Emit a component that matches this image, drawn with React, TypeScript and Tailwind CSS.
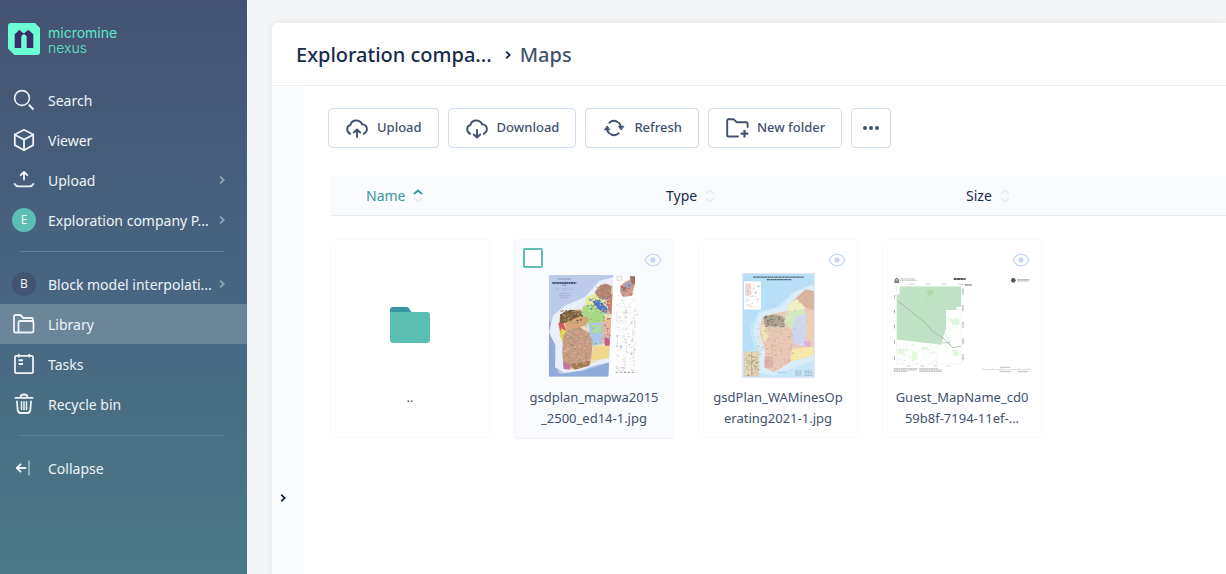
import React from 'react';
import clsx from 'clsx';

type IconProps = { className?: string };

const Stroke: React.FC<IconProps & { children: React.ReactNode; width?: number }> = ({
  className = 'w-6 h-6',
  children,
  width = 1.6,
}) => (
  <svg
    viewBox="0 0 24 24"
    className={className}
    fill="none"
    stroke="currentColor"
    strokeWidth={width}
    strokeLinecap="round"
    strokeLinejoin="round"
    aria-hidden="true"
  >
    {children}
  </svg>
);

const SearchIcon = () => (
  <Stroke>
    <circle cx="10" cy="10" r="7.4" />
    <path d="M16.8 16.8 21.5 21.5" strokeWidth="2" strokeLinecap="butt" />
  </Stroke>
);

const CubeIcon = () => (
  <Stroke width={1.8}>
    <path d="M12 1.8 21.2 6.5v10.6L12 22.2 2.8 17.1V6.5z" />
    <path d="M2.8 6.8 12 11.6l9.2-4.8M12 11.6v10.4" />
  </Stroke>
);

const UploadTrayIcon = () => (
  <Stroke width={1.8}>
    <path d="M12 11.5V4.2M8.7 7.2 12 4l3.3 3.2" />
    <path d="M2.6 16c1 1.7 2.3 2.4 4.2 2.4h10.4c1.9 0 3.2-.7 4.2-2.4" />
  </Stroke>
);

const LibraryIcon = () => (
  <Stroke width={1.8}>
    <path d="M5.5 20.5H3.5A1.5 1.5 0 0 1 2 19V4.5A1.5 1.5 0 0 1 3.5 3h4.8l3 3h8.2A1.5 1.5 0 0 1 21 7.5V9" />
    <path d="M6.5 20.5v-10A1.5 1.5 0 0 1 8 9h12a1.5 1.5 0 0 1 1.5 1.5V19a1.5 1.5 0 0 1-1.5 1.5z" />
  </Stroke>
);

const TasksIcon = () => (
  <Stroke width={1.8}>
    <rect x="3" y="3.8" width="18" height="17.4" rx="1.5" />
    <path d="M6.8 2.6v2M17.2 2.6v2" />
    <path d="M6.5 8.2H11M6.5 12H11" strokeLinecap="butt" strokeWidth="2" />
  </Stroke>
);

const BinIcon = () => (
  <Stroke width={1.8}>
    <path d="M3.5 5.8h17M8.5 5.5c0-2 1-3 3.500-3s3.500 1 3.500 3" />
    <path d="M5 9.5l.7 8.7c.2 1.900 1.300 2.800 3 2.800h6.600c1.700 0 2.800-.9 3-2.800L19 9.500" />
    <path d="M9.5 9.8v7.700M12 9.800v7.700M14.500 9.800v7.700" strokeWidth="1.5" />
  </Stroke>
);

const CollapseIcon = () => (
  <Stroke width={1.9}>
    <path d="M13.5 12H5M8.500 8.300 4.800 12l3.700 3.700" />
    <path d="M17 4.5v15" strokeWidth="1.8" opacity="0.5" strokeLinecap="butt" />
  </Stroke>
);

const CLOUD =
  'M5.2 17.800C3.200 16.800 2.200 15.300 2.200 13.200c0-2.100 1.300-3.800 3.200-4.300C6.200 6 8.600 4.500 11.300 4.500c2.600 0 4.800 1.500 5.700 3.900 2.900.1 4.900 2 4.900 4.700 0 2.200-1.100 3.800-3.100 4.700';

const CloudUpIcon = () => (
  <Stroke width={1.9}>
    <path d={CLOUD} />
    <path d="M12 21v-7M8.800 16.500 12 13.500l3.200 3" />
  </Stroke>
);

const CloudDownIcon = () => (
  <Stroke width={1.9}>
    <path d={CLOUD} />
    <path d="M12 14v7.500M8.800 18.500 12 21.500l3.200-3" />
  </Stroke>
);

const RefreshIcon = () => (
  <Stroke width={2}>
    <path d="M7.300 6.700A7 7 0 0 1 15.400 5.900M16.700 17.300a7 7 0 0 1-8.100.8" />
    <path d="M5 13a7 7 0 0 0 2 4M19 11a7 7 0 0 0-2-4" />
    <path d="M5 10.300 2.500 13.700h5zM19 13.700l-2.500-3.400h5z" fill="currentColor" strokeWidth="1" />
  </Stroke>
);

const NewFolderIcon = () => (
  <Stroke width={1.9}>
    <path d="M13 20.500H3.200a1 1 0 0 1-1-1V4.300a1 1 0 0 1 1-1h5.600l2.800 2.900h10a1 1 0 0 1 1 1V11" />
    <path d="M19.500 14v7.500M15.700 17.700h7.500" strokeLinecap="butt" strokeWidth="2.2" />
  </Stroke>
);

const ChevronRight: React.FC<IconProps> = ({ className }) => (
  <svg viewBox="0 0 8 8" className={className} fill="none" stroke="currentColor" strokeWidth="1.8" aria-hidden="true">
    <path d="M2.2 0.6 5.7 4 2.2 7.4" />
  </svg>
);

const EyeIcon = () => (
  <svg viewBox="0 0 18 14" className="w-[18px] h-[14px]" fill="none" stroke="#cddbef" strokeWidth="1.6" aria-hidden="true">
    <path d="M1 7C3 3 5.700 1.200 9 1.200S15 3 17 7c-2 4-4.700 5.800-8 5.800S3 11 1 7z" />
    <circle cx="9" cy="7" r="2.6" fill="#c4d4ec" stroke="none" />
  </svg>
);

const Logo = () => (
  <a href="#home" aria-label="micromine nexus" className="flex gap-2 px-2 pt-[23px] h-20">
    <svg viewBox="0 0 32 32" className="w-8 h-8 shrink-0" aria-hidden="true">
      <path d="M3 0h24l5 5v24a3 3 0 0 1-3 3H6.500L0 25.500V3a3 3 0 0 1 3-3z" fill="#6dfdd2" />
      <path
        d="M6.700 25V11.300L11.500 6.800 15 10h1.500L20.300 6.800l5 4.500V25h-6.600V13.500l-2-2.200h-1.600l-1.900 2.200V25z"
        fill="#3b2c6b"
      />
    </svg>
    <span className="font-['Inter','Liberation_Sans',sans-serif] text-[14px] leading-[15px] text-[#5fe8c4] pt-0.5">
      <span className="block">micromine</span>
      <span className="block font-light">nexus</span>
    </span>
  </a>
);

interface NavItem {
  label: string;
  icon?: React.ReactNode;
  badge?: { letter: string; color: string };
  more?: boolean;
  active?: boolean;
}

const NAV_GROUPS: NavItem[][] = [
  [
    { label: 'Search', icon: <SearchIcon /> },
    { label: 'Viewer', icon: <CubeIcon /> },
    { label: 'Upload', icon: <UploadTrayIcon />, more: true },
    { label: 'Exploration company P...', badge: { letter: 'E', color: 'bg-[#5bc0b2]' }, more: true },
  ],
  [
    { label: 'Block model interpolati...', badge: { letter: 'B', color: 'bg-[#455373]' }, more: true },
    { label: 'Library', icon: <LibraryIcon />, active: true },
    { label: 'Tasks', icon: <TasksIcon /> },
    { label: 'Recycle bin', icon: <BinIcon /> },
  ],
  [{ label: 'Collapse', icon: <CollapseIcon /> }],
];

const Sidebar = () => (
  <nav className="w-[247px] shrink-0 bg-linear-to-b from-[#445372] via-[#476581] to-[#4a7986] text-[#eef3f7]">
    <Logo />
    {NAV_GROUPS.map((group, i) => (
      <React.Fragment key={i}>
        {i > 0 && <hr className="ml-5 mr-[23px] mt-[11px] mb-3 border-[#63809a]" />}
        <ul>
          {group.map((item) => (
            <li key={item.label}>
              <a
                href="#nav"
                className={clsx(
                  'flex items-center h-10 pl-3 pr-[21px] text-[14px]',
                  item.active && 'bg-[#6b8699]'
                )}
              >
                {item.badge ? (
                  <span
                    className={clsx(
                      'flex items-center justify-center w-6 h-6 rounded-full text-[12px]',
                      item.badge.color
                    )}
                  >
                    {item.badge.letter}
                  </span>
                ) : (
                  item.icon
                )}
                <span className="flex-1 pl-3 whitespace-nowrap">{item.label}</span>
                {item.more && <ChevronRight className="w-2 h-2 text-[#8ea3b5]" />}
              </a>
            </li>
          ))}
        </ul>
      </React.Fragment>
    ))}
  </nav>
);

const SortIcon: React.FC<{ up?: boolean }> = ({ up }) => (
  <svg viewBox="0 0 10 14" className="w-[10px] h-[14px]" fill="none" strokeWidth="2" aria-hidden="true">
    <path d="M1 5 5 1.5 9 5" stroke={up ? '#349aa0' : '#e9eef3'} />
    <path d="M1 9 5 12.5 9 9" stroke="#e9eef3" />
  </svg>
);

// small deterministic generator so the map textures are stable between renders
const scatter = (seed: number, count: number, x: number, y: number, w: number, h: number) => {
  let s = seed;
  const next = () => {
    s = (s * 16807) % 2147483647;
    return s / 2147483647;
  };
  next();
  return Array.from({ length: count }, () => ({
    x: x + next() * w,
    y: y + next() * h,
    size: 2 + next() * 4,
    pick: next(),
  }));
};

interface SpecksProps {
  seed: number;
  count: number;
  area: [number, number, number, number];
  colors: string[];
  clip?: string;
  opacity?: number;
}

const Specks: React.FC<SpecksProps> = ({ seed, count, area, colors, clip, opacity = 1 }) => (
  <g clipPath={clip} opacity={opacity}>
    {scatter(seed, count, ...area).map((p, i) => (
      <rect
        key={i}
        x={p.x}
        y={p.y}
        width={p.size}
        height={p.size * 0.7}
        fill={colors[Math.floor(p.pick * colors.length)]}
      />
    ))}
  </g>
);

const GeologyMap = () => (
  <svg viewBox="115 115 276 309" className="w-[92px] h-[103px]" aria-hidden="true">
    <defs>
      <clipPath id="geo-sheet"><path d="M117 118H311L296 423H117z" /></clipPath>
      <clipPath id="geo-south">
        <path d="M165 285 205 275 240 290 252 325 246 365 240 388 195 400 162 392 158 350z" />
      </clipPath>
    </defs>
    <path d="M115 116H390V424H115z" fill="#fdfdfe" />
    <g clipPath="url(#geo-sheet)">
      <path d="M115 115H315V425H115z" fill="#bccbe9" />
      <path d="M117 250 140 290 135 350 150 400 117 423z" fill="#92abd8" />
      <path d="M117 370 150 415 220 405 300 380V423H117z" fill="#8fabd9" />
      <path d="M311 125 270 135 225 185 165 210 130 240 118 290 138 330 136 395 165 412 215 404 250 390 300 380z" fill="#e9eff9" />
      <path d="M311 150 285 142 262 160 254 180 228 198 215 218 180 222 152 238 146 270 152 300 160 330 156 360 166 396 190 402 240 388 262 375 298 368z" fill="#e9dfc0" />
      <path d="M255 170 272 148 290 144 306 152 304 180 290 192 270 190z" fill="#ad8570" />
      <path d="M290 190 311 170V240L298 232z" fill="#d07a74" />
      <path d="M230 185 256 174 275 196 300 232 285 238 252 215 228 205z" fill="#e5e997" />
      <path d="M248 196 270 192 300 225 286 234 262 218z" fill="#5377c4" />
      <path d="M222 212 246 206 282 236 290 258 238 264 212 245z" fill="#a8d881" />
      <path d="M238 264 275 260 282 290 276 325 250 330 240 295z" fill="#a9c6e5" />
      <path d="M244 268h30v24h-25z" fill="#abd9a0" />
      <path d="M276 258 305 250 303 325H278z" fill="#e1b8a7" />
      <path d="M284 306h16v24h-14z" fill="#c65a91" />
      <path d="M252 334 300 330 297 368 243 374z" fill="#f1d78b" />
      <path d="M146 262 160 258 172 292 155 303z" fill="#d65a5c" />
      <path d="M154 278 170 285 160 320 150 300z" fill="#e5d654" />
      <path d="M152 236 182 222 214 226 218 250 196 262 168 262 150 262z" fill="#7b6141" />
      <path d="M165 262 214 240 240 246 232 266 200 280 170 284z" fill="#d6a877" />
      <path d="M160 300 176 284 210 274 238 292 248 320 246 352 240 388 195 400 162 394 158 350z" fill="#c69b85" />
      <path d="M160 378 184 388 180 402 162 400z" fill="#c672a6" />
      <path d="M183 386 242 376 238 390 196 402z" fill="#a27a52" />
    </g>
    <Specks seed={11} count={320} area={[158, 275, 92, 125]} colors={['#b67c6a', '#dcb59c', '#8b9e68', '#c69b85', '#e1baa5']} clip="url(#geo-south)" opacity={0.9} />
    <Specks seed={29} count={80} area={[150, 222, 66, 40]} colors={['#5f4a35', '#8f7b4b', '#b5896a', '#a79f74']} />
    <Specks seed={37} count={50} area={[232, 180, 60, 45]} colors={['#e3ea96', '#3865b9', '#89b56f', '#f0ecad']} />
    <Specks seed={53} count={45} area={[278, 185, 22, 130]} colors={['#cf5f69', '#f2cd5f', '#a56a5d', '#e4b7a0', '#8aa6d8']} />
    <Specks seed={61} count={40} area={[220, 220, 55, 105]} colors={['#c1e49b', '#9bc7ea', '#7fbd86']} />
    <Specks seed={83} count={30} area={[260, 150, 40, 34]} colors={['#93705e', '#c29479', '#d6947f']} />
    <path d="M145 130h40M158 149h12" stroke="#5c6a96" strokeWidth="2" strokeDasharray="4 1" />
    <path d="M128 142h72" stroke="#27345f" strokeWidth="4" strokeDasharray="6 1" />
    <path d="M137 160h10M158 160h16M183 160h6M150 173h30M146 180h38M152 186h22" stroke="#7f90bb" strokeWidth="1.5" strokeDasharray="3 1" />
    <path d="M332 150 345 140 360 132 374 120 376 145 366 180 340 184 331 168z" fill="#cf9b91" />
    <path d="M360 122h16v22h-10zM336 154h14v10h-14z" fill="#95716a" />
    <path d="M350 142h16v14h-16z" fill="#84afd7" />
    <path d="M322 122h14v12h-14z" fill="none" stroke="#999" />
    <Specks seed={97} count={32} area={[334, 140, 34, 40]} colors={['#5b79c0', '#d34d4d', '#ba756f', '#ddac90']} />
    <Specks seed={101} count={150} area={[316, 190, 64, 225]} colors={['#ececf2', '#d3ded5', '#e2d5db', '#bfc0ca', '#e9e7d5']} />
    <path d="M322 225v35M323 300v30M348 218v45M375 235v35M350 310v40M370 280v40M346 365v30M372 355v35" stroke="#9a9fac" strokeWidth="2" strokeDasharray="2 4" />
    <path d="M318 410h62" stroke="#9a9fac" strokeWidth="3" strokeDasharray="7 5" />
  </svg>
);

const MinesMap = () => (
  <svg viewBox="138 111 220 316" className="w-[73px] h-[105px]" aria-hidden="true">
    <defs>
      <clipPath id="mine-land">
        <path d="M355 166 330 160 308 180 280 205 274 225 238 232 200 242 194 270 192 295 202 325 208 350 204 395 235 410 285 378 355 358z" />
      </clipPath>
    </defs>
    <path d="M138 111H358V427H138z" fill="#e2e4f3" />
    <path d="M142 114H354V424H142z" fill="#c6e6f9" />
    <path d="M142 114H354V150L290 170 240 215 190 225 160 280 175 340 142 350z" fill="#b9def7" />
    <path d="M354 145 300 165 255 212 190 232 172 285 188 340 185 410 235 420 354 372z" fill="#dbedf9" />
    <path d="M355 166 330 160 308 180 280 205 274 225 238 232 200 242 194 270 192 295 202 325 208 350 204 395 235 410 285 378 355 358z" fill="#e8c9b7" />
    <g clipPath="url(#mine-land)">
      <path d="M300 185 325 158 356 165V222L330 215z" fill="#d9b49d" />
      <path d="M276 204 304 190 330 218 300 232 275 225z" fill="#f2f1c2" />
      <path d="M270 228 325 220 332 262 290 285 268 262z" fill="#d3e8bf" />
      <path d="M300 240 335 235 332 335 290 320 288 285z" fill="#cfd6ec" />
      <path d="M332 225h24v110h-24z" fill="#ebcdb6" />
      <path d="M325 316h20v18h-20z" fill="#deb1d4" />
      <path d="M288 340 355 332V358L285 378z" fill="#f6eaa7" />
      <path d="M192 268h12l14 35-14 18z" fill="#eee3b5" />
      <path d="M203 245 228 236 262 242 265 268 235 272 206 266z" fill="#b1a08d" />
      <path d="M206 362h25v34h-25z" fill="#dfb2ac" />
    </g>
    <Specks seed={17} count={170} area={[204, 275, 85, 125]} colors={['#d5a594', '#eed5c4', '#c59485', '#b7aa9b', '#dfb09e']} clip="url(#mine-land)" opacity={0.6} />
    <Specks seed={23} count={100} area={[204, 238, 60, 34]} colors={['#8e8071', '#b8a58e', '#77706a', '#8fb79f']} clip="url(#mine-land)" />
    <Specks seed={41} count={80} area={[270, 165, 86, 180]} colors={['#dcb5c0', '#e9e8b7', '#d4b0a2', '#c5d7ee']} clip="url(#mine-land)" opacity={0.6} />
    <Specks seed={43} count={30} area={[180, 260, 34, 120]} colors={['#d39ebe', '#b79d95', '#efcf9b']} opacity={0.6} />
    <path d="M172 123h152M213 131h74" stroke="#53606f" strokeWidth="4" strokeDasharray="6 1 3 1" />
    <path d="M144 136h51v85h-51z" fill="#fff" />
    <path d="M148 142h17v36h-17z" fill="#eed6cb" />
    <Specks seed={71} count={60} area={[148, 140, 42, 76]} colors={['#d5c4d3', '#e8d3c3', '#c3c8d0', '#efecf3']} />
    <path d="M145 348h44v74h-44z" fill="#e6d8b8" stroke="#b9bfae" />
    <path d="M148 372 165 380 184 370M167 350v70M150 400l17-20 18 18" fill="none" stroke="#a0a57b" strokeWidth="2" />
    <Specks seed={73} count={55} area={[148, 352, 38, 65]} colors={['#9ba67c', '#c3ac83', '#d59f92', '#7f8c6e']} opacity={0.7} />
    <path d="M245 410h22M298 406h20M326 406h22M298 412h20M326 412h25M298 418h20M326 419h25" stroke="#8298aa" strokeWidth="2" strokeDasharray="4 1" />
  </svg>
);

const GuestMap = () => (
  <svg viewBox="38 125 414 290" className="w-[138px] h-[96px]" aria-hidden="true">
    <path d="M38 125H452V415H38z" fill="#fff" />
    <path d="M47 153H243V388H47z" fill="#fefffe" stroke="#dfe3df" />
    <Specks seed={19} count={60} area={[50, 326, 120, 56]} colors={['#e5f8e2', '#eafae8', '#d7f2d3']} />
    <Specks seed={31} count={35} area={[192, 250, 44, 126]} colors={['#e5f8e2', '#eefbec']} />
    <path d="M50 342h34v6H70v10H50zM95 350l18 4-4 20-16 8zM122 336h20v9h-20zM205 252l30-4 4 20-20 4zM215 345h20v20h-14z" fill="#e2f6de" />
    <path d="M57 154H242V215H228V225H197V278L190 300 184 330 48 314V178H57z" fill="#bfe2c4" />
    <path d="M138 178c4 20-10 40-2 60 8 16 28 20 38 34s30 30 36 60" fill="none" stroke="#b4d6cf" strokeWidth="2" />
    <path d="M50 198 68 210 98 235 130 260 146 275 152 286 176 302 196 316 208 330 218 339 230 336 242 334" fill="none" stroke="#94a69a" strokeWidth="2" />
    <path d="M140 167h18M140 173h18M143 179h10" stroke="#98bd72" strokeWidth="2" strokeDasharray="4 1" />
    <path d="M188 324h20" stroke="#7a8a7e" strokeWidth="2" strokeDasharray="3 1" />
    <path d="M84 147h18M134 147h16M184 147h16M234 147h16M78 394h12M120 394h12M160 394h12M200 394h12" stroke="#aaa" strokeWidth="2" strokeDasharray="3 1" />
    <path d="M41 180v10M41 225v10M41 270v10M41 316v10M41 365v10M248 160v18M248 210v18M248 260v18M248 310v18M248 358v20" stroke="#888" strokeWidth="3" strokeDasharray="3 1" />
    <path d="M42 138c0-12 12-12 12 0z" fill="#bbb" stroke="#444" strokeWidth="2" />
    <path d="M41 141h15" stroke="#555" strokeWidth="3" />
    <path d="M58 131h44M58 135h50" stroke="#999" strokeWidth="2" strokeDasharray="4 1" />
    <path d="M220 131h36" stroke="#222" strokeWidth="5" strokeDasharray="9 1" />
    <path d="M254 149h21" stroke="#444" strokeWidth="3" strokeDasharray="4 1" />
    <circle cx="400" cy="135" r="7" fill="#555" />
    <path d="M412 133h37M412 137h34" stroke="#777" strokeWidth="2" strokeDasharray="5 1" />
    <path d="M39 402h72M39 406h70M39 410h40M116 402h58M116 406h68M116 410h68" stroke="#999" strokeWidth="2" strokeDasharray="6 1" />
    <path d="M308 400v5h140v-5M336 400v5M364 400v5M418 400v5" fill="none" stroke="#bbb" strokeWidth="1.5" />
    <path d="M361 398h30M358 411h34M414 411h30" stroke="#888" strokeWidth="2" strokeDasharray="5 1" />
  </svg>
);

const FolderArt = () => (
  <svg viewBox="0 0 40 36" className="w-10 h-9" aria-hidden="true">
    <path d="M0 8V3a3 3 0 0 1 3-3h13c1.500 0 2.500.6 3.300 1.800L22 6v4H0z" fill="#349aa0" />
    <path d="M0 5h37a3 3 0 0 1 3 3v25a3 3 0 0 1-3 3H3a3 3 0 0 1-3-3z" fill="#5bc0b2" />
  </svg>
);

interface FileEntry {
  lines: string[];
  art: React.ReactNode;
  folder?: boolean;
  hovered?: boolean;
}

const FILES: FileEntry[] = [
  { lines: ['..'], art: <FolderArt />, folder: true },
  { lines: ['gsdplan_mapwa2015', '_2500_ed14-1.jpg'], art: <GeologyMap />, hovered: true },
  { lines: ['gsdPlan_WAMinesOp', 'erating2021-1.jpg'], art: <MinesMap /> },
  { lines: ['Guest_MapName_cd0', '59b8f-7194-11ef-...'], art: <GuestMap /> },
];

const FileCard: React.FC<{ file: FileEntry }> = ({ file }) => (
  <li
    className={clsx(
      'relative w-40 pt-[31px] pb-2 border rounded',
      file.hovered
        ? 'bg-[#fafbff] border-[#f6f8fc] shadow-[0_1px_2px_rgba(0,0,0,0.07)]'
        : 'bg-white border-[#fafafc]'
    )}
  >
    {file.hovered && (
      <input
        type="checkbox"
        aria-label={`Select ${file.lines.join('')}`}
        className="absolute left-2 top-2 w-5 h-5 appearance-none bg-white border-2 border-[#5bc0b2] rounded-[2px]"
      />
    )}
    {!file.folder && (
      <button type="button" aria-label="Preview" className="absolute right-[11px] top-[13px]">
        <EyeIcon />
      </button>
    )}
    <div className="flex items-center justify-center h-[108px]">{file.art}</div>
    <p className="mt-2 min-h-[42px] text-center text-[13px] leading-[21px] text-[#42526e]">
      {file.lines.map((line) => (
        <span key={line} className="block">{line}</span>
      ))}
    </p>
  </li>
);

const ACTIONS = [
  { label: 'Upload', icon: <CloudUpIcon /> },
  { label: 'Download', icon: <CloudDownIcon /> },
  { label: 'Refresh', icon: <RefreshIcon /> },
  { label: 'New folder', icon: <NewFolderIcon /> },
];

const COLUMNS = ['Name', 'Type', 'Size'];

export default function App() {
  return (
    <div className="flex min-h-screen overflow-hidden bg-[#f4f5f7] font-['Noto_Sans','Open_Sans',sans-serif]">
      <Sidebar />

      <main className="flex-1 min-w-0 flex flex-col ml-[25px] mt-[23px] bg-white rounded-tl-md shadow-[0_0_10px_rgba(0,0,0,0.08)]">
        <header className="flex items-center h-[63px] px-6 pt-0.5 border-b border-[#e9edf2] text-[20px] font-medium text-[#172b4d]">
          <a href="#project">Exploration compa...</a>
          <ChevronRight className="w-2 h-2 ml-3 mr-2" />
          <span className="text-[#42526e]">Maps</span>
        </header>

        <div className="flex flex-1">
          <aside className="flex flex-col justify-end w-8 shrink-0 bg-[#fafbff] pb-[72px] pl-[7px]">
            <button type="button" aria-label="Expand panel" className="text-[#172b4d]">
              <ChevronRight className="w-2 h-2" />
            </button>
          </aside>

          <section className="flex-1 min-w-0 pl-6 pt-[22px]">
            <div className="flex gap-[9px]">
              {ACTIONS.map((action) => (
                <button
                  key={action.label}
                  type="button"
                  className="flex items-center gap-2 h-10 px-4 border border-[#cfdced] rounded text-[13px] font-medium text-[#42526e]"
                >
                  {action.icon}
                  {action.label}
                </button>
              ))}
              <button
                type="button"
                aria-label="More actions"
                className="flex items-center justify-center w-10 h-10 border border-[#cfdced] rounded text-[#42526e]"
              >
                <svg viewBox="0 0 16 4" className="w-4 h-1" fill="currentColor" aria-hidden="true">
                  <circle cx="2" cy="2" r="2" />
                  <circle cx="8" cy="2" r="2" />
                  <circle cx="14" cy="2" r="2" />
                </svg>
              </button>
            </div>

            <div className="grid grid-cols-3 mt-7 ml-0.5 -mr-1 h-10 bg-[#fafbff] border-b border-[#e9edf2]">
              {COLUMNS.map((column, i) => (
                <button
                  key={column}
                  type="button"
                  className={clsx(
                    'flex items-center gap-2 pl-9 text-[14px]',
                    i === 0 ? 'text-[#349aa0]' : 'text-[#172b4d]'
                  )}
                >
                  {column}
                  <SortIcon up={i === 0} />
                </button>
              ))}
            </div>

            <ul className="flex flex-wrap gap-6 ml-0.5 mt-[23px] pb-6">
              {FILES.map((file) => (
                <FileCard key={file.lines[0]} file={file} />
              ))}
            </ul>
          </section>
        </div>
      </main>
    </div>
  );
}
